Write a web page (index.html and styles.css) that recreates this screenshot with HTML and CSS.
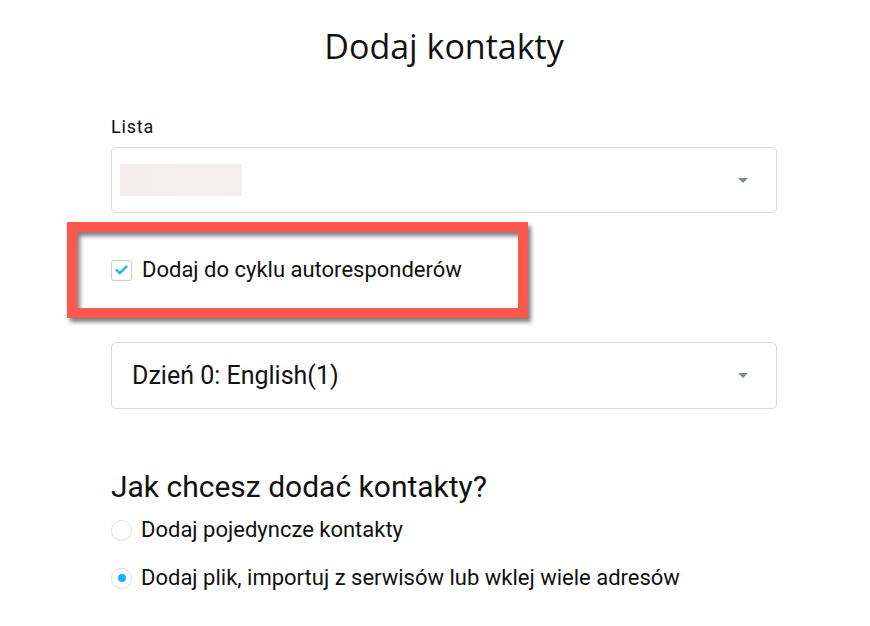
FILE: index.html
```html
<!DOCTYPE html>
<html lang="pl">
<head>
    <meta charset="UTF-8">
    <meta name="viewport" content="width=device-width, initial-scale=1.0">
    <title>Dodaj kontakty</title>
    <link rel="stylesheet" href="styles.css">
</head>
<body>
    <div class="formularz">
        <h1 class="tytul">Dodaj kontakty</h1>

        <label class="etykieta">Lista</label>
        <div class="wybor">
            <span class="zamazane"></span>
            <span class="strzalka"></span>
        </div>

        <div class="wyroznienie">
            <label class="pole">
                <span class="kwadrat">
                    <svg width="13" height="10" viewBox="0 0 13 10"><path d="M1.5 5.2 L4.8 8.2 L11.5 1.5" fill="none" stroke="#12b5f5" stroke-width="2.4" stroke-linecap="round" stroke-linejoin="round"/></svg>
                </span>
                Dodaj do cyklu autoresponderów
            </label>
        </div>

        <div class="wybor wybor-dzien">
            <span class="wartosc">Dzień 0: English(1)</span>
            <span class="strzalka"></span>
        </div>

        <h2 class="pytanie">Jak chcesz dodać kontakty?</h2>

        <label class="opcja">
            <span class="kolko"></span>
            Dodaj pojedyncze kontakty
        </label>
        <label class="opcja">
            <span class="kolko zaznaczone"></span>
            Dodaj plik, importuj z serwisów lub wklej wiele adresów
        </label>
    </div>
</body>
</html>
```

FILE: styles.css
```css
body {
    margin: 0;
    background: #fff;
    font-family: Roboto, "Liberation Sans", sans-serif;
    color: #111;
}
.formularz {
    width: 666px;
    margin-left: 111px;
    padding-top: 24px;
    display: flex;
    flex-direction: column;
}
.tytul {
    font-family: "Open Sans", "Noto Sans", sans-serif;
    font-weight: 400;
    font-size: 34px;
    line-height: 44px;
    text-align: center;
    margin: 0 0 48px;
}
.etykieta {
    font-size: 18px;
    line-height: 22px;
    letter-spacing: 0.8px;
    margin-bottom: 9px;
}
.wybor {
    height: 64px;
    border: 1px solid #dcdcdc;
    border-radius: 5px;
    display: flex;
    align-items: center;
    justify-content: space-between;
    padding: 0 28px 0 8px;
}
.zamazane {
    width: 122px;
    height: 32px;
    background: linear-gradient(90deg, #f5eded, #f5efef);
}
.strzalka {
    width: 0;
    height: 0;
    border-left: 5px solid transparent;
    border-right: 5px solid transparent;
    border-top: 5px solid #7a8c9c;
}
.wyroznienie {
    box-sizing: border-box;
    margin: 9px 0 24px -44px;
    width: 461px;
    height: 96px;
    border: 10px solid #fd584d;
    display: flex;
    align-items: center;
    padding-left: 34px;
    box-shadow: 3px 4px 4px rgba(0, 0, 0, 0.5), inset 3px 4px 4px rgba(0, 0, 0, 0.5);
}
.pole {
    display: flex;
    align-items: center;
    gap: 10px;
    font-size: 22px;
    line-height: 28px;
}
.kwadrat {
    width: 19px;
    height: 19px;
    border: 1px solid #ccc;
    border-radius: 3px;
    display: flex;
    align-items: center;
    justify-content: center;
}
.wybor-dzien {
    height: 65px;
    padding-left: 20px;
}
.wartosc {
    font-size: 25px;
}
.pytanie {
    font-weight: 400;
    font-size: 30px;
    line-height: 36px;
    margin: 60px 0 10px;
}
.opcja {
    display: flex;
    align-items: center;
    gap: 9px;
    font-size: 22px;
    line-height: 30px;
    margin-bottom: 18px;
}
.kolko {
    width: 19px;
    height: 19px;
    border: 1px solid #ddd;
    border-radius: 50%;
    display: flex;
    align-items: center;
    justify-content: center;
}
.zaznaczone::after {
    content: "";
    width: 8px;
    height: 8px;
    border-radius: 50%;
    background: #10b6f7;
}
```
